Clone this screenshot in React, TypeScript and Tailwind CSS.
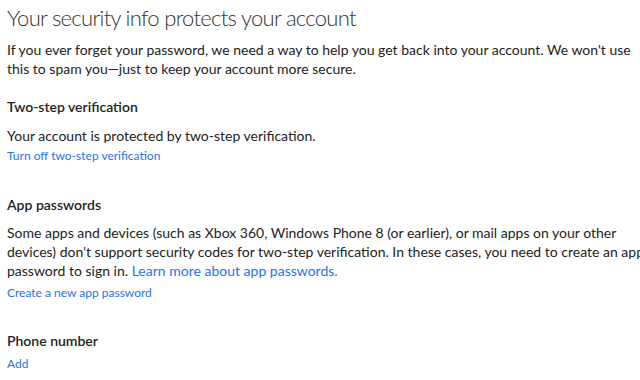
export default function App() {
  return (
    <div
      className="h-[380px] w-[640px] overflow-hidden bg-white pl-[7px] text-[#222]"
      style={{ fontFamily: 'Lato, "Open Sans", Arial, sans-serif' }}
    >
      <h1 className="pt-[3px] text-[22px] font-light leading-[30px] tracking-[-0.7px] text-[#333] whitespace-nowrap">
        Your security info protects your account
      </h1>
      <p className="mt-[7px] text-[14px] leading-[19px] whitespace-nowrap">
        If you ever forget your password, we need a way to help you get back into your account. We won't use
        <br />
        this to spam you—just to keep your account more secure.
      </p>

      <h2 className="mt-[19px] text-[14px] font-semibold leading-[19px]">Two-step verification</h2>
      <p className="mt-[10px] text-[14px] leading-[19px]">Your account is protected by two-step verification.</p>
      <a href="#" className="mt-[3px] block text-[12px] leading-[16px] text-[#2672ec]">
        Turn off two-step verification
      </a>

      <h2 className="mt-[31px] text-[14px] font-semibold leading-[19px]">App passwords</h2>
      <p className="mt-[9px] text-[14px] leading-[19px] whitespace-nowrap">
        Some apps and devices (such as Xbox 360, Windows Phone 8 (or earlier), or mail apps on your other
        <br />
        devices) don't support security codes for two-step verification. In these cases, you need to create an app
        <br />
        password to sign in. <a href="#" className="text-[#2672ec]">Learn more about app passwords.</a>
      </p>
      <a href="#" className="mt-[5px] block text-[12px] leading-[16px] text-[#2672ec]">
        Create a new app password
      </a>

      <h2 className="mt-[30px] text-[14px] font-semibold leading-[19px]">Phone number</h2>
      <a href="#" className="mt-[6px] block text-[12px] leading-[16px] text-[#2672ec]">
        Add
      </a>
    </div>
  )
}
